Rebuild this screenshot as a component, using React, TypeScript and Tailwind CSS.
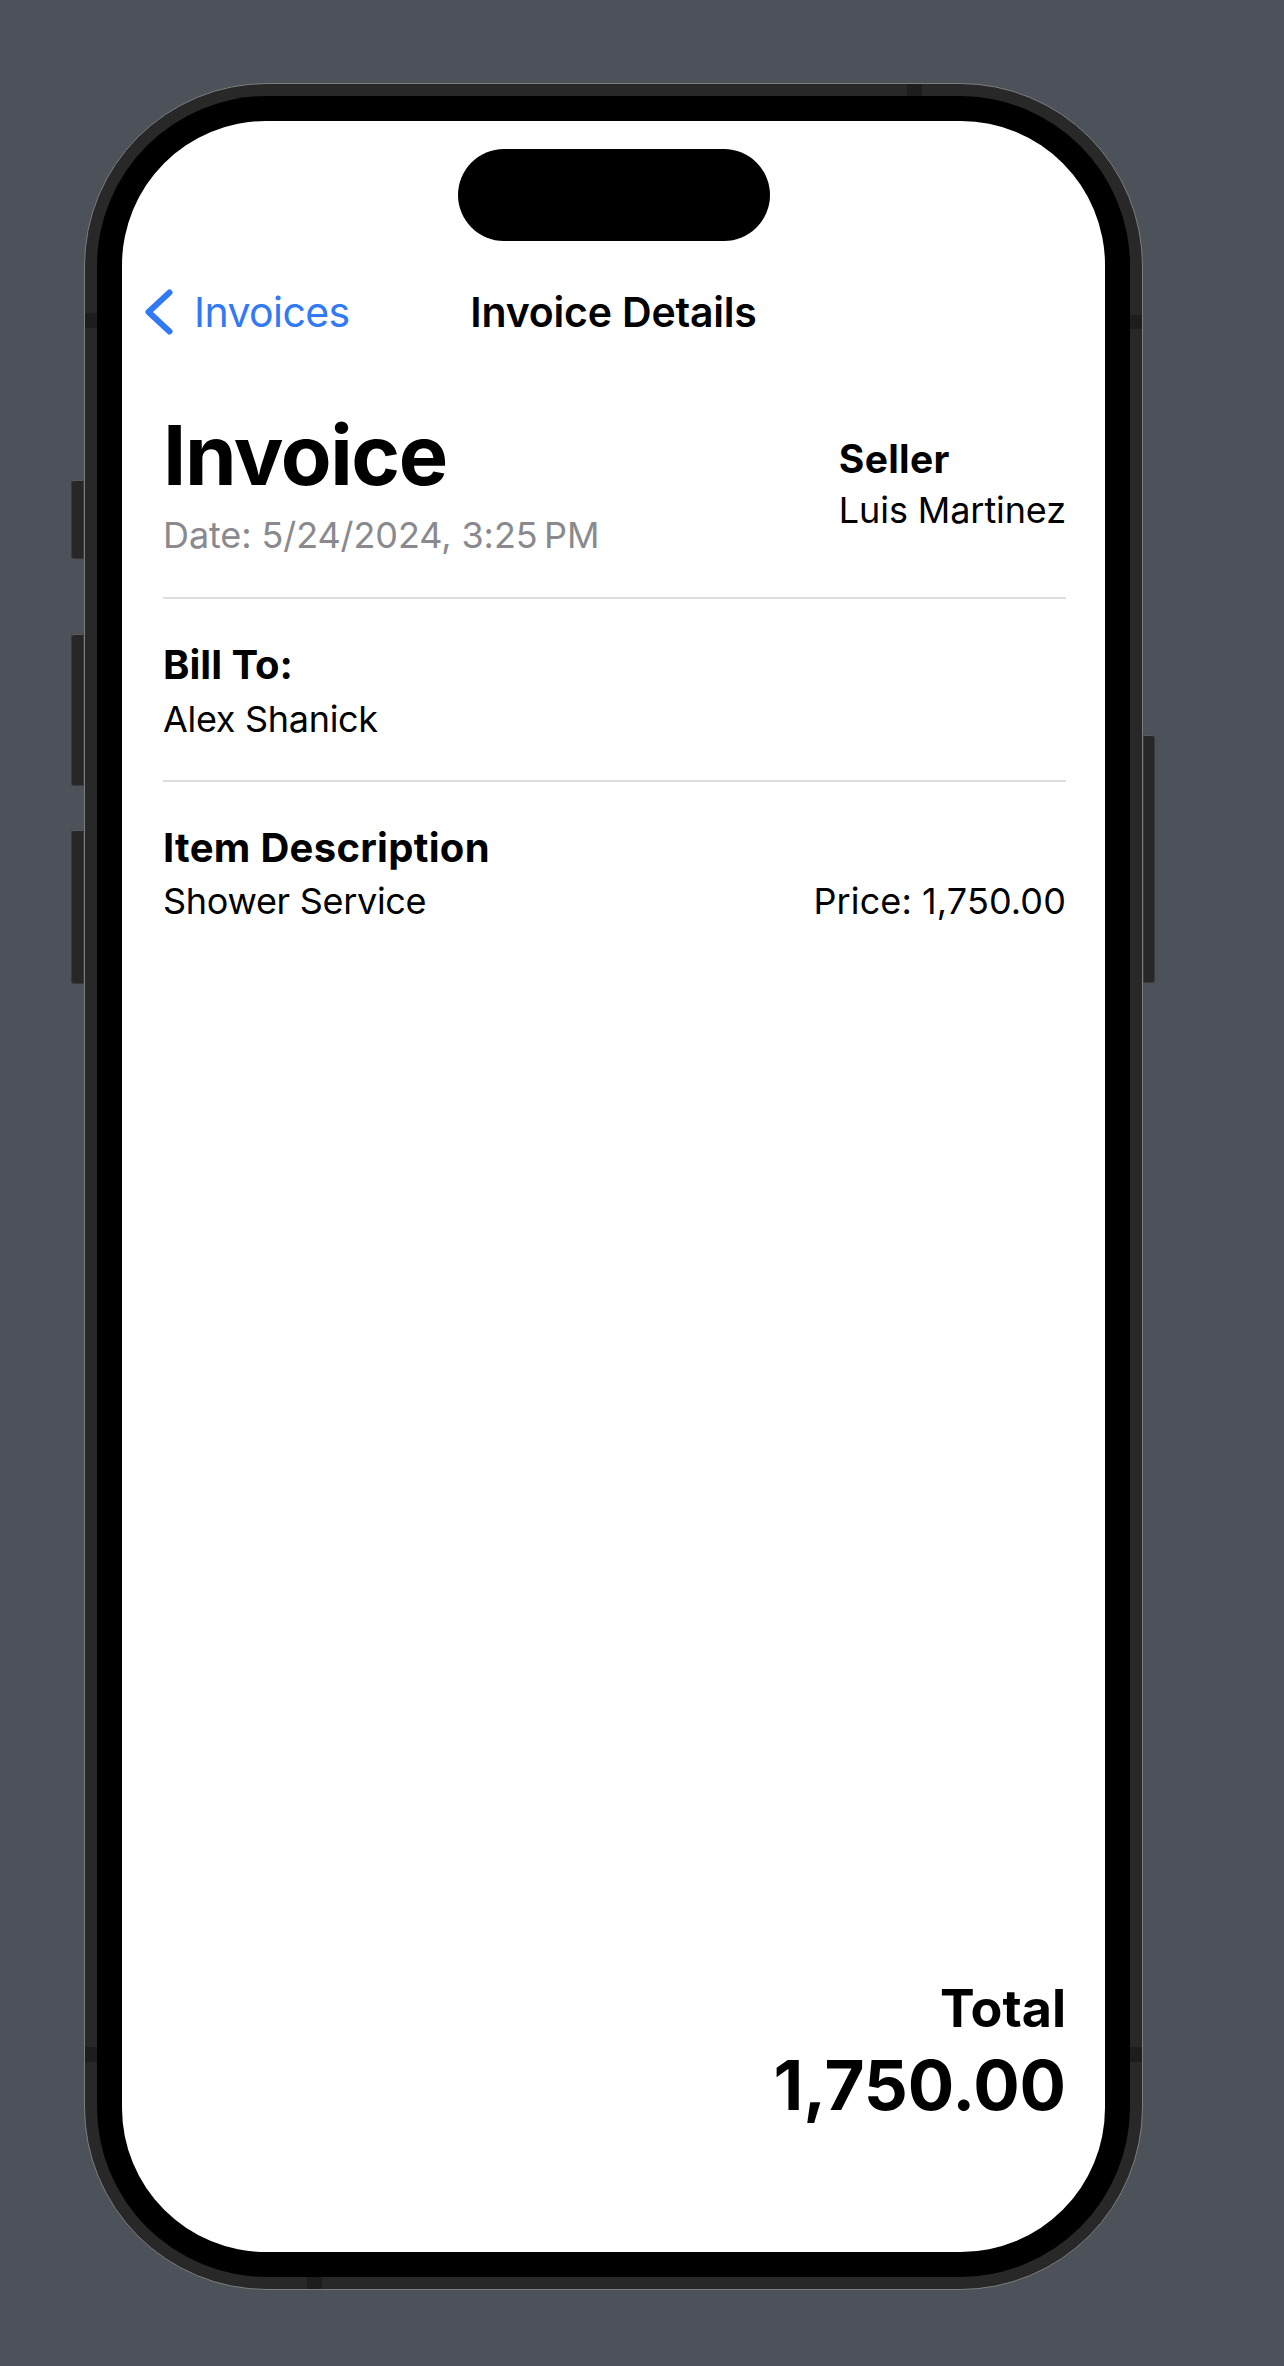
import React from "react";

function Chevron() {
  return (
    <svg width="28" height="46" viewBox="0 0 28 46" fill="none" className="shrink-0">
      <polyline
        points="24.5,3.5 3.5,23 24.5,42.5"
        stroke="#3179f5"
        strokeWidth="6"
        strokeLinecap="round"
        strokeLinejoin="round"
      />
    </svg>
  );
}

export default function App() {
  return (
    <div className="w-[1284px] h-[2366px] bg-[#4d5159] pl-[84px] pt-[83px] font-['Inter',sans-serif] text-black">
      {/* phone frame */}
      <div className="relative w-[1059px] h-[2207px] rounded-[183px] border border-[#7d7d7d] bg-[#282828] p-[12px]">
        {/* side buttons */}
        <div className="absolute left-[-14px] top-[396px] w-[13px] h-[79px] rounded-l-[3px] bg-[#272727] border border-[#3a3a3a] border-t-[#5a5a5a]" />
        <div className="absolute left-[-14px] top-[550px] w-[13px] h-[152px] rounded-l-[3px] bg-[#272727] border border-[#3a3a3a] border-t-[#5a5a5a]" />
        <div className="absolute left-[-14px] top-[746px] w-[13px] h-[154px] rounded-l-[3px] bg-[#272727] border border-[#3a3a3a] border-t-[#5a5a5a]" />
        <div className="absolute right-[-13px] top-[651px] w-[12px] h-[248px] rounded-r-[3px] bg-[#272727] border border-[#3a3a3a] border-t-[#5a5a5a]" />
        {/* antenna bands */}
        <div className="absolute left-0 top-[229px] w-[12px] h-[15px] bg-[#1d1d1d]" />
        <div className="absolute right-0 top-[231px] w-[12px] h-[14px] bg-[#1d1d1d]" />
        <div className="absolute left-0 top-[1963px] w-[12px] h-[15px] bg-[#1d1d1d]" />
        <div className="absolute right-0 top-[1963px] w-[12px] h-[15px] bg-[#1d1d1d]" />
        <div className="absolute left-[222px] bottom-0 w-[15px] h-[12px] bg-[#1d1d1d]" />
        <div className="absolute left-[822px] top-0 w-[15px] h-[12px] bg-[#1d1d1d]" />

        <div className="relative w-full h-full rounded-[170px] bg-black p-[25px]">
          {/* screen */}
          <div className="relative w-full h-full rounded-[144px] bg-white overflow-hidden flex flex-col">
            {/* dynamic island */}
            <div className="absolute top-[28px] left-1/2 -translate-x-1/2 w-[312px] h-[92px] rounded-full bg-black" />

            {/* nav bar */}
            <div className="mt-[168px] h-[41px] grid grid-cols-[1fr_auto_1fr] items-center">
              <div className="flex items-center pl-[23px] gap-[21px]">
                <Chevron />
                <span className="text-[41px] leading-none text-[#3179f5] tracking-[-0.6px]">Invoices</span>
              </div>
              <span className="text-[41px] leading-none font-semibold tracking-[-0.2px]">Invoice Details</span>
              <div />
            </div>

            {/* content */}
            <div className="flex-1 flex flex-col pl-[41px] pr-[39px]">
              {/* header */}
              <div className="mt-[84px] flex justify-between items-start">
                <div className="flex flex-col">
                  <span className="text-[83px] leading-none font-bold tracking-[-1.4px]">Invoice</span>
                  <span className="mt-[20px] text-[36px] leading-none text-[#8a8a8e] tracking-[-0.1px]">
                    Date: 5/24/2024, 3:25{"\u2009"}PM
                  </span>
                </div>
                <div className="flex flex-col pt-[25px]">
                  <span className="text-[39px] leading-none font-bold tracking-[0.3px]">Seller</span>
                  <span className="mt-[14px] text-[36px] leading-none tracking-[-0.1px]">Luis Martinez</span>
                </div>
              </div>

              <div className="mt-[44px] h-[2px] bg-[#dedede]" />

              <div className="mt-[46px] flex flex-col">
                <span className="text-[40px] leading-none font-bold tracking-[0px]">Bill To:</span>
                <span className="mt-[16px] text-[36px] leading-none tracking-[-0.3px]">Alex Shanick</span>
              </div>

              <div className="mt-[43px] h-[2px] bg-[#dedede]" />

              <div className="mt-[46px] flex flex-col">
                <span className="text-[40px] leading-none font-bold tracking-[0.3px]">Item Description</span>
                <div className="mt-[15px] flex justify-between items-center">
                  <span className="text-[36px] leading-none tracking-[-0.3px]">Shower Service</span>
                  <span className="text-[36px] leading-none tracking-[0.1px]">Price: 1,750.00</span>
                </div>
              </div>

              <div className="mt-auto pb-[132px] flex flex-col items-end">
                <span className="text-[52px] leading-none font-bold tracking-[0px]">Total</span>
                <span className="mt-[16px] text-[69px] leading-none font-bold tracking-[-0.1px]">1,750.00</span>
              </div>
            </div>
          </div>
        </div>
      </div>
    </div>
  );
}
